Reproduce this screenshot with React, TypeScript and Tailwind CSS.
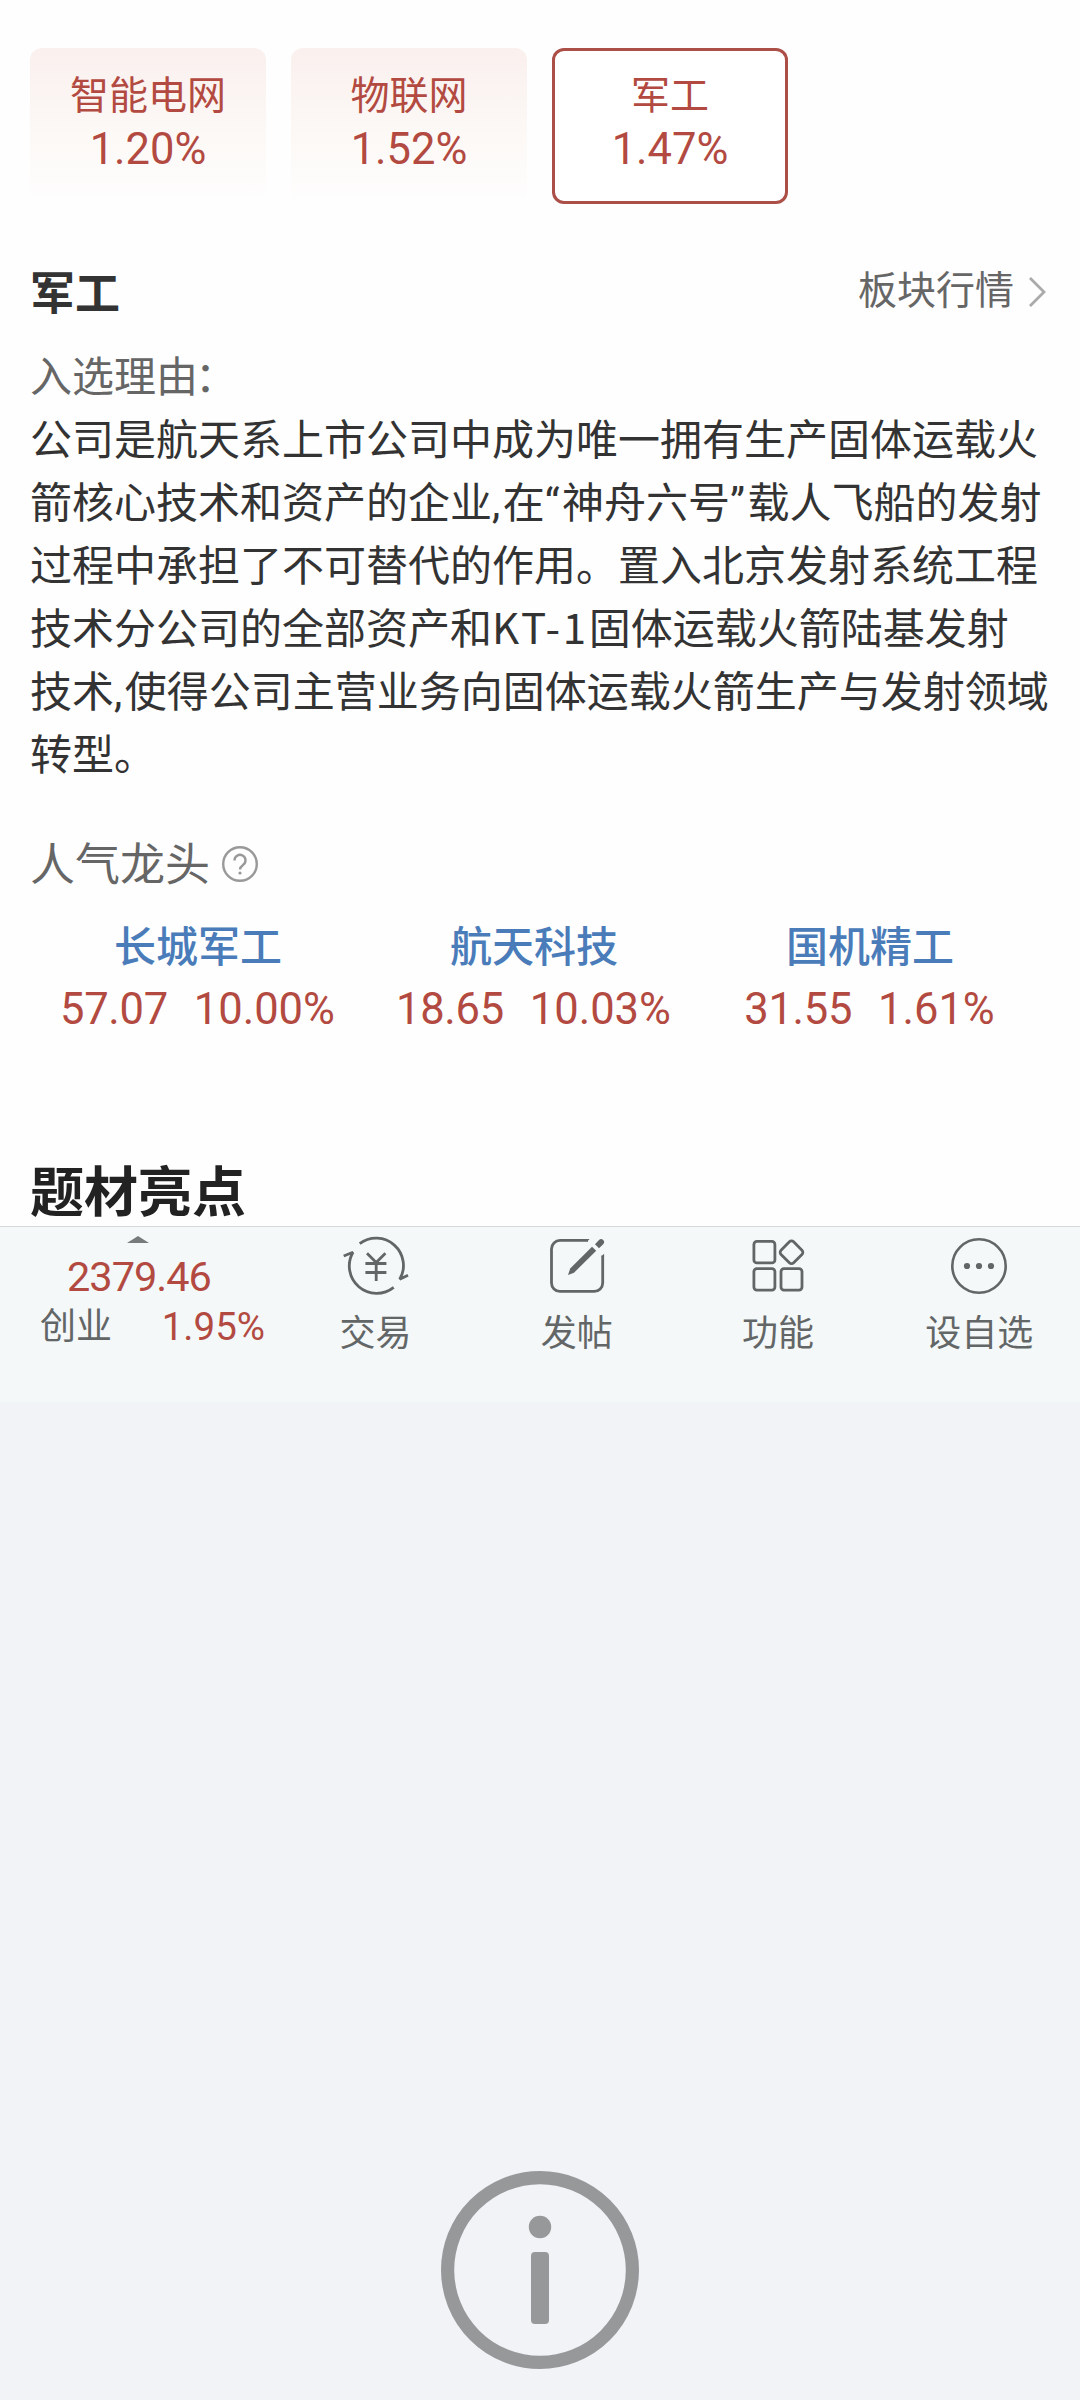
import React from 'react';

const concepts = [
  { id: 1, name: '智能电网', change: '1.20%', active: false },
  { id: 2, name: '物联网', change: '1.52%', active: false },
  { id: 3, name: '军工', change: '1.47%', active: true },
];

const reasonLines = [
  '公司是航天系上市公司中成为唯一拥有生产固体运载火',
  '箭核心技术和资产的企业,在“神舟六号”载人飞船的发射',
  '过程中承担了不可替代的作用。置入北京发射系统工程',
  '技术分公司的全部资产和KT-1固体运载火箭陆基发射',
  '技术,使得公司主营业务向固体运载火箭生产与发射领域',
  '转型。',
];

const leaders = [
  { id: 1, name: '长城军工', price: '57.07', change: '10.00%' },
  { id: 2, name: '航天科技', price: '18.65', change: '10.03%' },
  { id: 3, name: '国机精工', price: '31.55', change: '1.61%' },
];

// Latin runs and quotes get a little extra room between the Chinese characters
const ReasonLine = ({ text }: { text: string }) => (
  <p className="h-[63px]">
    {text.split(/([,“”]|KT-1)/).map((part, i) => {
      if (part === 'KT-1') return <span key={i} className="font-['Noto_Sans_CJK_SC',sans-serif] leading-none tracking-[2.700px]">{part}</span>;
      if (/^[,“”]$/.test(part)) return <span key={i} className="tracking-[2.4px]">{part}</span>;
      return part;
    })}
  </p>
);

const TradeIcon = () => (
  <svg className="h-[60px] w-[68px] overflow-visible" viewBox="0 0 68 60" fill="none" stroke="currentColor" strokeWidth="2.8">
    <path d="M17.700 7.700A27.300 27.300 0 0 1 57.700 43.300L66 39.300" strokeLinejoin="bevel" />
    <path d="M51.700 51.300A27.300 27.300 0 0 1 11 16.300L1.700 20" strokeLinejoin="bevel" />
    <path d="M25 17.300l9.200 9.200 9.200-9.200M23.400 27.500h21M23.400 36.500h21M34.200 26.500V45" />
  </svg>
);

const PostIcon = () => (
  <svg className="h-[60px] w-[60px]" viewBox="0 0 60 60" fill="none" stroke="currentColor" strokeWidth="2.8">
    <path d="M41 4.400H13a8.500 8.500 0 0 0-8.500 8.500v34a8.500 8.500 0 0 0 8.500 8.500h34.200a8.500 8.500 0 0 0 8.500-8.500V19.500" />
    <g fill="currentColor" stroke="none">
      <path d="M40 3h2.600l-2.600 2.800zM54.300 20.600l2.800-2.800v2.800z" />
      <path d="M21 39l2.200-6.500L45 10.700l4.200 4L27 36.700z" />
      <path d="M48 8.300l4-4.200a2.900 2.900 0 0 1 4.200 4.100L52 12.300z" />
    </g>
  </svg>
);

const FeatureIcon = () => (
  <svg className="h-[60px] w-[60px]" viewBox="0 0 60 60" fill="none" stroke="currentColor" strokeWidth="2.8">
    <rect x="5.900" y="5.400" width="21" height="21.500" rx="3" />
    <rect x="5.900" y="32.600" width="21" height="21.500" rx="3" />
    <rect x="33" y="32.600" width="21" height="21.500" rx="3" />
    <rect x="34.600" y="7.400" width="17.800" height="17.800" rx="3" transform="rotate(45 43.500 16.300)" />
  </svg>
);

const MoreIcon = () => (
  <svg className="h-[60px] w-[60px]" viewBox="0 0 60 60" fill="none" stroke="currentColor" strokeWidth="2.6">
    <circle cx="30" cy="30" r="26.700" />
    <g fill="currentColor" stroke="none">
      <circle cx="18" cy="30" r="3.100" />
      <circle cx="30" cy="30" r="3.100" />
      <circle cx="42" cy="30" r="3.100" />
    </g>
  </svg>
);

const tabs = [
  { id: 'trade', label: '交易', Icon: TradeIcon },
  { id: 'post', label: '发帖', Icon: PostIcon },
  { id: 'feature', label: '功能', Icon: FeatureIcon },
  { id: 'more', label: '设自选', Icon: MoreIcon },
];

const App = () => {
  return (
    <div className="flex h-[2400px] w-[1080px] flex-col overflow-hidden bg-[#f1f3f7] font-[Roboto,'Noto_Sans_CJK_SC',sans-serif] text-[#333]">
      <main className="h-[1226px] overflow-hidden bg-[#fefefe] px-[30px] pt-12">
        <div className="flex gap-[25px]">
          {concepts.map((c) => (
            <div
              key={c.id}
              className={`flex h-[156px] w-[236px] flex-col items-center rounded-xl pt-[23px] text-[#b34a41] ${
                c.active ? 'bg-white ring-3 ring-inset ring-[#ab4f47]' : 'bg-linear-to-b from-[#faf0ee] via-[#fcf8f5] to-[#fefefe]'
              }`}
            >
              <span className="text-[39px] leading-[50px]">{c.name}</span>
              <span className="mt-[2px] text-[43.500px] leading-[54px]">{c.change}</span>
            </div>
          ))}
        </div>

        <div className="mt-[56px] flex h-[66px] items-center justify-between">
          <h2 className="pt-1 text-[45px] font-bold">军工</h2>
          <div className="flex items-center gap-[14px] pr-1 pb-[3px] text-[39px] text-[#666]">
            <span>板块行情</span>
            <svg className="h-8 w-[18px]" viewBox="0 0 18 32" fill="none" stroke="#aaa" strokeWidth="2.8">
              <path d="M2 2l14 14L2 30" />
            </svg>
          </div>
        </div>

        <div className="mt-5 text-[42px] leading-[63px] whitespace-nowrap">
          <p className="text-[#666]">
            入选理由<span className="-ml-[3px]">：</span>
          </p>
          {reasonLines.map((line) => (
            <ReasonLine key={line} text={line} />
          ))}
        </div>

        <div className="mt-[47px] flex h-[63px] items-center gap-3 text-[#666]">
          <h3 className="pt-px text-[45px]">人气龙头</h3>
          <svg className="mb-[3px] h-9 w-9" viewBox="0 0 36 36" fill="none" stroke="#999" strokeWidth="2.4">
            <circle cx="18" cy="18" r="16.800" />
            <path d="M12.500 14.500a5.500 5.500 0 1 1 8.500 4.500c-2 1.400-3 2-3 4.500" />
            <circle cx="18" cy="27" r="1.600" fill="#999" stroke="none" />
          </svg>
        </div>

        <div className="mt-[21px] flex">
          {leaders.map((s) => (
            <div key={s.id} className="flex w-[336px] flex-col items-center">
              <span className="text-[42px] leading-[60px] font-medium text-[#4a7cba]">{s.name}</span>
              <div className="mt-px flex gap-[26px] pr-px text-[43.500px] leading-[62px] text-[#b34a41]">
                <span className="tracking-[-0.300px]">{s.price}</span>
                <span>{s.change}</span>
              </div>
            </div>
          ))}
        </div>

        <h2 className="mt-[118px] text-[54px] leading-[70px] font-bold text-[#222]">题材亮点</h2>
      </main>

      <footer className="flex h-[176px] border-t border-[#d3d9d9] bg-[#f4f8f9] text-[#636666]">
        <div className="flex w-[275px] flex-col items-center pt-[9px] text-[#b34a41]">
          <svg className="h-[7px] w-[22px]" viewBox="0 0 22 7">
            <path d="M0 7L11 0l11 7z" fill="#777b7b" />
          </svg>
          <span className="mt-[9px] pl-[3px] text-[41.500px] leading-[50px] tracking-[-1px]">2379.46</span>
          <div className="flex w-full items-center justify-between pr-[10px] pl-[40px] leading-[50px]">
            <span className="text-[36px] text-[#636666]">创业</span>
            <span className="text-[38.500px]">1.95%</span>
          </div>
        </div>
        {tabs.map(({ id, label, Icon }) => (
          <div key={id} className="flex w-[201.250px] flex-col items-center pt-[9px]">
            <Icon />
            <span className="mt-[13px] text-[36px] leading-[50px]">{label}</span>
          </div>
        ))}
      </footer>

      <div className="mt-[769px] flex justify-center">
        <svg className="h-[198px] w-[198px]" viewBox="0 0 198 198" fill="#97989a">
          <circle cx="99" cy="99" r="92.400" fill="none" stroke="#97989a" strokeWidth="13.200" />
          <circle cx="99" cy="56" r="11.200" />
          <rect x="90" y="81" width="18" height="72" rx="4" />
        </svg>
      </div>
    </div>
  );
};

export default App;
